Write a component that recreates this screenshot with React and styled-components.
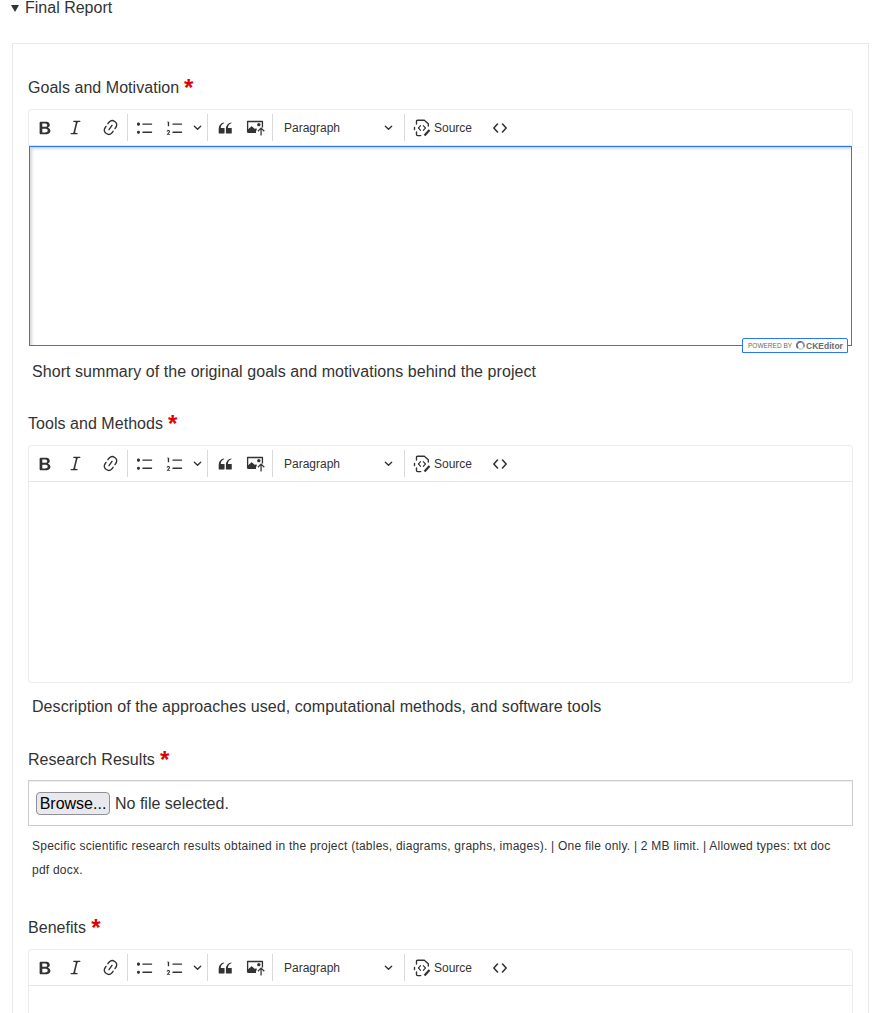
import React from "react";
import styled, { createGlobalStyle } from "styled-components";

const GlobalStyle = createGlobalStyle`
  html, body {
    margin: 0;
    height: 1013px;
    overflow: hidden;
    background: #fff;
    color: #333;
    font-family: "Liberation Sans", Arial, sans-serif;
    font-size: 16px;
  }
`;

const Page = styled.div`
  padding: 0 10px;
`;

const Summary = styled.div`
  display: flex;
  align-items: center;
  gap: 6px;
  height: 16px;
  line-height: 16px;
  margin-bottom: 27px;
  color: #333;
`;

const Triangle = styled.span`
  width: 0;
  height: 0;
  margin-left: 1px;
  border-left: 4px solid transparent;
  border-right: 4px solid transparent;
  border-top: 7px solid #333;
`;

const Panel = styled.div`
  margin: 0 0 0 2px;
  width: 857px;
  box-sizing: border-box;
  border: 1px solid #e9e9e9;
  padding: 31px 15px 0 15px;
`;

const Label = styled.div`
  display: flex;
  align-items: center;
  gap: 5px;
  height: 23px;
  padding-top: 1px;
  line-height: 23px;
  margin-bottom: 10px;
  letter-spacing: 0.04px;
`;

const Star = styled.span`
  color: #e00000;
  font-size: 24px;
  font-weight: 700;
  line-height: 24px;
  height: 24px;
`;

const Editor = styled.div`
  position: relative;
  width: 825px;
`;

const Toolbar = styled.div`
  display: flex;
  align-items: center;
  height: 37px;
  box-sizing: border-box;
  padding-left: 1px;
  background: #fff;
  border: 1px solid #ebebeb;
  border-bottom-color: #e6e6e6;
  border-radius: 4px 4px 0 0;
`;

const ToolButton = styled.span`
  display: flex;
  align-items: center;
  justify-content: center;
  flex: none;
  width: ${(p) => p.$w}px;
  margin-left: ${(p) => p.$ml || 0}px;
  color: #333;
`;

const Sep = styled.span`
  flex: none;
  width: 1px;
  height: 27px;
  margin-left: ${(p) => p.$ml || 0}px;
  background: #d9d9d9;
`;

const Dropdown = styled.span`
  display: flex;
  align-items: center;
  justify-content: space-between;
  flex: none;
  width: 131px;
  box-sizing: border-box;
  padding: 0 11px 0 11px;
  font-size: 12px;
  color: #333;
`;

const SourceButton = styled.span`
  display: flex;
  align-items: center;
  gap: 2px;
  flex: none;
  margin-left: 7px;
  font-size: 12px;
  color: #333;
`;

const Editable = styled.div`
  height: 201px;
  box-sizing: border-box;
  border: 1px solid #ebebeb;
  border-top: 0;
  border-radius: 0 0 4px 4px;
  background: #fff;

  ${(p) =>
    p.$focused &&
    `
    height: 200px;
    margin: 0 1px;
    border: 1px solid #2977ff;
    border-radius: 0;
    box-shadow: inset 2px 2px 3px rgba(0, 0, 0, 0.16);
  `}
`;

const PoweredBy = styled.div`
  position: absolute;
  right: 5px;
  bottom: -7px;
  display: flex;
  align-items: center;
  width: 106px;
  height: 15px;
  box-sizing: border-box;
  padding-left: 5px;
  background: #fff;
  border: 1px solid #2977ff;
  border-radius: 2px 2px 0 0;
  color: #6b6b6b;
  font-size: 6.5px;
  white-space: nowrap;
`;

const BrandLogo = styled.span`
  display: flex;
  margin: 0 1px 0 4px;
`;

const Brand = styled.b`
  font-size: 8.5px;
`;

const Hint = styled.div`
  margin: ${(p) => p.$top}px 0 0 4px;
  height: 24px;
  line-height: 24px;
  padding-bottom: ${(p) => p.$bottom}px;
  color: #333;
  letter-spacing: 0.06px;
`;

const FileBox = styled.div`
  display: flex;
  align-items: center;
  gap: 5px;
  width: 825px;
  height: 46px;
  margin-top: -1px;
  box-sizing: border-box;
  padding-left: 7px;
  border: 1px solid #ccc;
  box-shadow: inset 0 1px 1px rgba(0, 0, 0, 0.075);
`;

const BrowseButton = styled.button`
  width: 74px;
  height: 23px;
  padding: 1px 0 0;
  border: 1px solid #8f8f9d;
  border-radius: 4px;
  background: #e9e9ed;
  color: #000;
  font: 16px "Liberation Sans", Arial, sans-serif;
`;

const FileName = styled.span`
  padding-top: 2px;
`;

const SmallHint = styled.div`
  margin: 8px 0 0 4px;
  padding: 0 20px 33px 0;
  font-size: 12px;
  line-height: 24px;
  color: #333;
  letter-spacing: 0.235px;
`;

const BoldIcon = () => (
  <svg width="18" height="18" viewBox="0 0 20 20" fill="currentColor">
    <path d="M10.187 17H5.773c-.637 0-1.092-.138-1.364-.415-.273-.277-.409-.718-.409-1.323V4.738c0-.617.14-1.062.419-1.332.279-.27.73-.406 1.354-.406h4.68c.69 0 1.288.041 1.793.124.506.083.96.242 1.36.478.341.197.644.447.906.75a3.262 3.262 0 0 1 .808 2.162c0 1.401-.722 2.426-2.167 3.075C15.05 10.175 16 11.315 16 13.01a3.756 3.756 0 0 1-2.296 3.504 6.1 6.1 0 0 1-1.517.377c-.571.073-1.238.11-2 .11zm-.217-6.217H7v4.087h3.069c1.977 0 2.965-.69 2.965-2.072 0-.707-.256-1.22-.768-1.537-.512-.319-1.277-.478-2.296-.478zM7 5.13v3.619h2.606c.729 0 1.292-.067 1.69-.2a1.6 1.6 0 0 0 .91-.765c.165-.267.247-.566.247-.897 0-.707-.26-1.176-.778-1.409-.519-.232-1.31-.348-2.375-.348H7z" />
  </svg>
);

const ItalicIcon = () => (
  <svg width="19" height="19" viewBox="0 0 20 20" fill="currentColor">
    <path d="m9.586 14.633.021.004c-.036.335.095.655.393.962.082.083.173.15.274.201h1.474a.6.6 0 1 1 0 1.2H5.304a.6.6 0 0 1 0-1.2h1.15c.474-.07.809-.182 1.005-.334.157-.122.291-.32.404-.597l2.416-9.55a1.053 1.053 0 0 0-.281-.823 1.12 1.12 0 0 0-.442-.296H8.15a.6.6 0 0 1 0-1.2h6.443a.6.6 0 1 1 0 1.2h-1.195c-.376.056-.65.155-.823.296-.215.175-.423.491-.623.95l-2.366 9.587z" />
  </svg>
);

const LinkIcon = () => (
  <svg width="19" height="19" viewBox="0 0 20 20" fill="currentColor">
    <path d="m11.077 15 .991-1.416a.75.75 0 1 1 1.229.86l-1.148 1.64a.748.748 0 0 1-.217.206 5.251 5.251 0 0 1-8.503-5.955.741.741 0 0 1 .12-.274l1.147-1.639a.75.75 0 1 1 1.228.86L4.933 10.7l.006.003a3.75 3.75 0 0 0 6.132 4.294l.006.004zm5.494-5.335a.748.748 0 0 1-.12.274l-1.147 1.639a.75.75 0 1 1-1.228-.86l.86-1.23a3.75 3.75 0 0 0-6.144-4.301l-.86 1.229a.75.75 0 0 1-1.229-.86l1.148-1.64a.748.748 0 0 1 .217-.206 5.251 5.251 0 0 1 8.503 5.955zm-4.563-2.532a.75.75 0 0 1 .184 1.045l-3.155 4.505a.75.75 0 1 1-1.229-.86l3.155-4.506a.75.75 0 0 1 1.045-.184z" />
  </svg>
);

const BulletIcon = () => (
  <svg width="18" height="18" viewBox="0 0 20 20" fill="currentColor">
    <path d="M7 5.75c0 .414.336.75.75.75h9.5a.75.75 0 1 0 0-1.5h-9.5a.75.75 0 0 0-.75.75zm-6 0C1 4.784 1.777 4 2.75 4c.966 0 1.75.777 1.75 1.75 0 .966-.777 1.75-1.75 1.75C1.784 7.5 1 6.723 1 5.75zm6 9c0 .414.336.75.75.75h9.5a.75.75 0 1 0 0-1.5h-9.5a.75.75 0 0 0-.75.75zm-6 0c0-.966.777-1.75 1.75-1.75.966 0 1.75.777 1.75 1.75 0 .966-.777 1.75-1.75 1.75-.966 0-1.75-.777-1.75-1.75z" />
  </svg>
);

const NumberedIcon = () => (
  <svg width="18" height="18" viewBox="0 0 20 20" fill="currentColor">
    <path d="M7 5.75c0 .414.336.75.75.75h9.5a.75.75 0 1 0 0-1.5h-9.5a.75.75 0 0 0-.75.75zM3.5 3v5H2V3.7H1v-.7h2.5zM.6 17.5l2.2-2.7c.3-.4.5-.7.5-1 0-.4-.3-.6-.6-.6-.4 0-.7.3-.7.7H.7c0-1 .8-1.7 1.9-1.7 1.1 0 1.9.6 1.9 1.6 0 .6-.3 1.1-.8 1.7l-1 1.1h1.9v.9H.6zM7 14.75c0 .414.336.75.75.75h9.5a.75.75 0 1 0 0-1.5h-9.5a.75.75 0 0 0-.75.75z" />
  </svg>
);

const ChevronIcon = () => (
  <svg width="9" height="9" viewBox="0 0 10 10" fill="none" stroke="currentColor" strokeWidth="1.5" strokeLinecap="round" strokeLinejoin="round">
    <path d="M1.5 3.5 5 7l3.5-3.5" />
  </svg>
);

const QuoteIcon = () => (
  <svg width="18" height="18" viewBox="0 0 20 20" fill="currentColor">
    <path d="M3 10.423a6.5 6.5 0 0 1 6.056-6.408l.038.67C6.448 5.423 5.354 7.663 5.22 10H9c.552 0 .5.432.5.986v4.511c0 .554-.448.503-1 .503h-5c-.552 0-.5-.449-.5-1.003v-4.574zm8 0a6.5 6.5 0 0 1 6.056-6.408l.038.67c-2.646.739-3.74 2.979-3.873 5.315H17c.552 0 .5.432.5.986v4.511c0 .554-.448.503-1 .503h-5c-.552 0-.5-.449-.5-1.003v-4.574z" />
  </svg>
);

const ImageUploadIcon = () => (
  <svg width="19" height="19" viewBox="0 0 20 20" fill="currentColor">
    <path d="M2 3h15.5c.3 0 .5.2.5.5V10h-1.4V4.4H2.4v7.4l3.6-3 3.2 2.8 1.4-.9.9.8-1.3 3.5H1.5c-.3 0-.5-.2-.5-.5V3.5c0-.3.2-.5.5-.5H2z" />
    <path d="M1.5 13 6 9l4.5 4v2.7h-9z" />
    <circle cx="13.5" cy="7" r="1.8" />
    <path d="M15.2 18.5v-6.3l-2.2 2.2-.9-.9 3.8-3.8 3.8 3.8-.9.9-2.3-2.2v6.3z" />
  </svg>
);

const SourceIcon = () => (
  <svg width="20" height="20" viewBox="0 0 20 20" fill="none" stroke="currentColor" strokeWidth="1.4" strokeLinecap="round" strokeLinejoin="round">
    <path d="M4.5 6V3.2c0-.6.4-1 1-1h6.8l4 3.6V8" />
    <path d="M2.5 9.5v2M4.5 14v2.6c0 .6.4 1 1 1h3.2" />
    <path d="M8.6 7.7 6.4 10l2.2 2.3M11.3 7.7l2.2 2.3-2.2 2.3" strokeWidth="1.1" />
    <path d="m12.5 17.5 5-5.5" strokeWidth="2.2" strokeLinecap="butt" />
  </svg>
);

const CodeIcon = () => (
  <svg width="16" height="12" viewBox="0 0 16 12" fill="none" stroke="currentColor" strokeWidth="1.6" strokeLinecap="round" strokeLinejoin="round">
    <path d="M5.5 2 1.8 6l3.7 4M10.5 2l3.7 4-3.7 4" />
  </svg>
);

const CkLogo = () => (
  <svg width="9" height="9" viewBox="0 0 10 10" fill="none" strokeWidth="1.9">
    <path d="M2.4 8A4 4 0 0 1 6.4 1.2" stroke="#6b6b82" />
    <path d="M6.4 1.2 A4 4 0 0 1 8.4 7" stroke="#8d8da6" />
    <path d="M8.4 7A4 4 0 0 1 2.4 8" stroke="#d8d8c8" />
  </svg>
);

function EditorToolbar() {
  return (
    <Toolbar>
      <ToolButton $w={30}><BoldIcon /></ToolButton>
      <ToolButton $w={30}><ItalicIcon /></ToolButton>
      <ToolButton $w={34} $ml={3}><LinkIcon /></ToolButton>
      <Sep />
      <ToolButton $w={34}><BulletIcon /></ToolButton>
      <ToolButton $w={26}><NumberedIcon /></ToolButton>
      <ToolButton $w={18}><ChevronIcon /></ToolButton>
      <Sep $ml={1} />
      <ToolButton $w={34}><QuoteIcon /></ToolButton>
      <ToolButton $w={26}><ImageUploadIcon /></ToolButton>
      <Sep $ml={4} />
      <Dropdown>Paragraph<ChevronIcon /></Dropdown>
      <Sep />
      <SourceButton><SourceIcon />Source</SourceButton>
      <ToolButton $w={16} $ml={20}><CodeIcon /></ToolButton>
    </Toolbar>
  );
}

function Field({ title, children }) {
  return (
    <>
      <Label>{title} <Star>*</Star></Label>
      {children}
    </>
  );
}

export default function App() {
  return (
    <Page>
      <GlobalStyle />
      <Summary><Triangle />Final Report</Summary>
      <Panel>
        <Field title="Goals and Motivation">
          <Editor>
            <EditorToolbar />
            <Editable $focused />
            <PoweredBy>POWERED BY <BrandLogo><CkLogo /></BrandLogo><Brand>CKEditor</Brand></PoweredBy>
          </Editor>
          <Hint $top={14} $bottom={27}>Short summary of the original goals and motivations behind the project</Hint>
        </Field>
        <Field title="Tools and Methods">
          <Editor>
            <EditorToolbar />
            <Editable />
          </Editor>
          <Hint $top={12} $bottom={28}>Description of the approaches used, computational methods, and software tools</Hint>
        </Field>
        <Field title="Research Results">
          <FileBox>
            <BrowseButton>Browse...</BrowseButton>
            <FileName>No file selected.</FileName>
          </FileBox>
          <SmallHint>Specific scientific research results obtained in the project (tables, diagrams, graphs, images). | One file only. | 2 MB limit. | Allowed types: txt doc pdf docx.</SmallHint>
        </Field>
        <Field title="Benefits">
          <Editor>
            <EditorToolbar />
            <Editable />
          </Editor>
        </Field>
      </Panel>
    </Page>
  );
}
